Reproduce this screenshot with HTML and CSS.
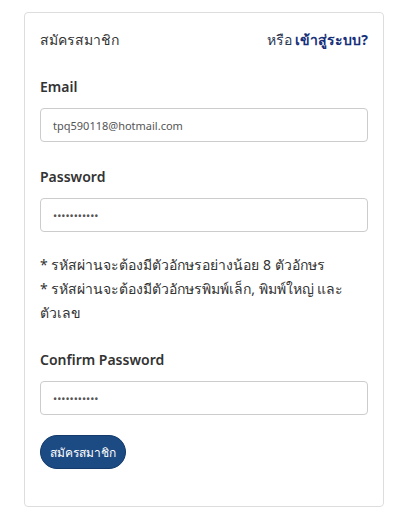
FILE: index.html
```html
<!DOCTYPE html>
<html lang="th">
<head>
    <meta charset="UTF-8">
    <meta name="viewport" content="width=device-width, initial-scale=1.0">
    <title>สมัครสมาชิก</title>
    <link rel="stylesheet" href="styles.css">
</head>
<body>
    <div class="card">
        <div class="card-head">
            <span class="title">สมัครสมาชิก</span>
            <span class="login">หรือ <a href="#">เข้าสู่ระบบ?</a></span>
        </div>
        <form class="register">
            <div class="field">
                <label>Email</label>
                <input type="text" value="tpq590118@hotmail.com">
            </div>
            <div class="field">
                <label>Password</label>
                <input type="password" value="12345678901">
            </div>
            <ul class="rules">
                <li>* รหัสผ่านจะต้องมีตัวอักษรอย่างน้อย 8 ตัวอักษร</li>
                <li>* รหัสผ่านจะต้องมีตัวอักษรพิมพ์เล็ก, พิมพ์ใหญ่ และตัวเลข</li>
            </ul>
            <div class="field">
                <label>Confirm Password</label>
                <input type="password" value="12345678901">
            </div>
            <button type="button" class="btn">สมัครสมาชิก</button>
        </form>
    </div>
</body>
</html>
```

FILE: styles.css
```css
body {
    font-family: "Noto Sans", "Open Sans", sans-serif;
    color: #333;
    margin: 0;
    padding: 0;
    background: #fff;
}
.card {
    margin: 12px 24px;
    padding: 15px 15px 37px;
    border: 1px solid #ddd;
    border-radius: 4px;
}
.card-head {
    display: flex;
    justify-content: space-between;
    align-items: center;
    height: 24px;
    font-size: 14px;
}
.login {
    color: #2a3550;
}
.login a {
    color: #16307a;
    font-weight: bold;
    text-decoration: none;
}
.field {
    margin-top: 24px;
}
.field label {
    display: block;
    font-size: 14px;
    font-weight: 600;
    line-height: 22px;
    margin-bottom: 10px;
}
.field input {
    display: block;
    box-sizing: border-box;
    width: 100%;
    height: 34px;
    padding: 0 12px;
    border: 1px solid #ccc;
    border-radius: 4px;
    font-family: inherit;
    font-size: 11px;
    color: #555;
}
.rules {
    list-style: none;
    margin: 21px 0 0;
    padding: 0;
    font-size: 14px;
    line-height: 24px;
}
.rules + .field {
    margin-top: 24px;
}
.btn {
    margin-top: 20px;
    width: 86px;
    height: 34px;
    border: 1px solid #133a6a;
    border-radius: 17px;
    background: #1c4a82;
    color: #fff;
    font-family: inherit;
    font-size: 12px;
    padding: 0;
}
```
